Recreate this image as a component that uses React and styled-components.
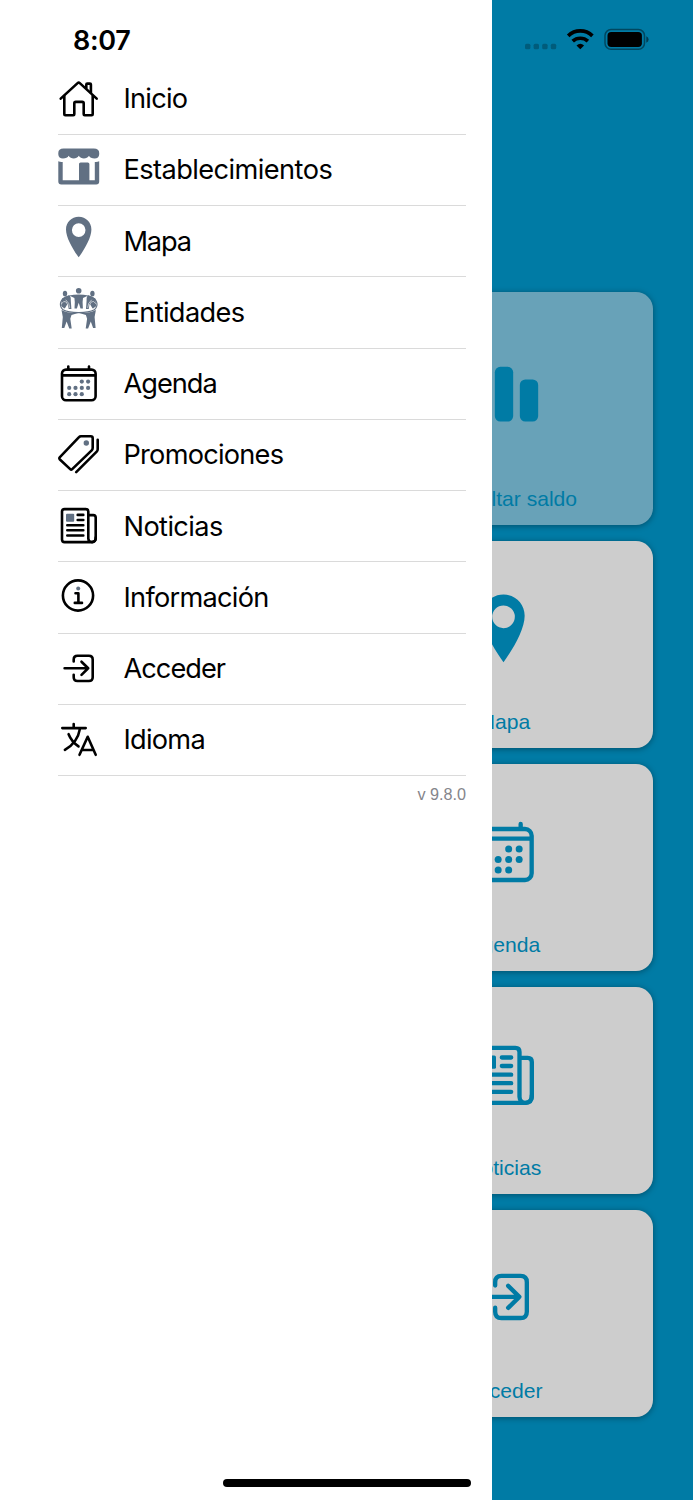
import React from "react";
import styled, { createGlobalStyle } from "styled-components";

const blue = "#007ba5";
const slate = "#617083";

const GlobalStyle = createGlobalStyle`
  * {
    box-sizing: border-box;
  }
  body {
    margin: 0;
    background: #fff;
  }
`;

const Screen = styled.div`
  display: grid;
  grid-template-columns: 492px 1fr;
  width: 693px;
  height: 1500px;
  overflow: hidden;
  font-family: Inter, "Liberation Sans", sans-serif;
`;

const Drawer = styled.aside`
  display: flex;
  flex-direction: column;
  min-width: 0;
  padding: 0 26px 0 58px;
  background: #fff;
  color: #000;
`;

const Clock = styled.time`
  height: 63.6px;
  padding: 24px 0 0 15px;
  font-size: 27px;
  font-weight: 600;
  line-height: 34px;
  letter-spacing: ${(props) => props.$spacing}px;
`;

const Menu = styled.ul`
  margin: 0;
  padding: 0;
  list-style: none;
`;

const MenuItem = styled.li`
  display: flex;
  align-items: center;
  gap: 23.5px;
  height: 71.25px;
  border-bottom: 1px solid #dadada;
  font-size: 27.2px;
  letter-spacing: ${(props) => props.$spacing}px;
  white-space: nowrap;
`;

const Version = styled.p`
  margin: 8px 0 0;
  color: #85858b;
  font-family: "Liberation Sans", Arial, sans-serif;
  font-size: 16.2px;
  line-height: 20px;
  text-align: right;
`;

const HomeIndicator = styled.div`
  align-self: flex-end;
  width: 247.5px;
  height: 8px;
  margin: auto -4.5px 13.5px 0;
  border-radius: 4px;
  background: #000;
`;

const Home = styled.main`
  display: flex;
  flex-direction: column;
  min-width: 0;
  overflow: hidden;
  background: ${blue};
`;

const StatusIcons = styled.div`
  display: flex;
  align-items: flex-start;
  height: 292px;
  padding: 28px 0 0 33px;
  flex: none;
`;

const Cards = styled.div`
  display: flex;
  flex-direction: column;
  align-items: flex-end;
  gap: 16.5px;
  padding-right: 39.7px;
`;

const Card = styled.div`
  display: flex;
  flex-direction: column;
  align-items: center;
  justify-content: space-between;
  flex: none;
  width: 299px;
  height: ${(props) => (props.$tall ? 232.5 : 206.5)}px;
  padding: ${(props) => props.$top}px 0 14px;
  border-radius: 17px;
  background: ${(props) => (props.$tall ? "#68a2b8" : "#cdcdcd")};
  box-shadow: 0 1px 6px rgba(0, 0, 0, 0.36);
  color: ${blue};
  font-family: "Liberation Sans", Arial, sans-serif;
  font-size: 21.1px;
  line-height: 24px;
`;

const Icon = styled.svg`
  flex: none;
  width: ${(props) => props.$size || 42}px;
  height: ${(props) => props.$size || 42}px;
  overflow: visible;
  fill: none;
  stroke: currentColor;
  stroke-width: 2.6;
  stroke-linecap: round;
  stroke-linejoin: round;

  .accent {
    fill: ${(props) => props.$accent || slate};
    stroke: none;
  }
  .accent-line {
    stroke: ${(props) => props.$accent || slate};
  }
`;

const shapes = {
  home: (
    <>
      <path d="M2.7 20.6 19.6 5.1q1.1-1 2.2 0L38.7 20.6" />
      <path d="M6.3 18v18.2q0 1 1 1h8q1 0 1-1V25.4q0-1.5 1.5-1.5h6.4q1.5 0 1.5 1.5v10.8q0 1 1 1h7q1 0 1-1V18" />
      <path d="M28.3 10V6.6q0-1 1-1h2.6q1 0 1 1v8.2" />
    </>
  ),
  store: (
    <g className="accent">
      <path d="M5.500-.6h30.300Q41.200-.6 41.200 4V5.200C41.200 7.900 39.300 9.600 36.600 9.600 34 9.600 31.700 8.600 31 6.800 29.800 8.600 28 9.600 25.900 9.600 23.800 9.600 22 8.600 20.800 6.800 19.600 8.600 17.800 9.600 15.700 9.600 13.600 9.600 11.800 8.600 10.600 6.800 9.900 8.600 7.600 9.600 5 9.600 2.200 9.600.3 7.900.3 5.200V4Q.3-.6 5.500-.6Z" />
      <path d="M.3 12.200Q2.500 13.300 4.700 12.900V31.200H21V15q0-1.600 1.600-1.600h7.200q1.600 0 1.600 1.600V31.200h5.400V12.900Q39 13.300 41.200 12.200V32.400q0 3-3 3H3.300q-3 0-3-3Z" />
    </g>
  ),
  pin: (
    <path
      className="accent"
      fillRule="evenodd"
      d="M20.700-3.300C13.500-3.300 8 2.300 8 9.400 8 17.500 14.700 29 20.700 37.300 26.700 29 33.400 17.500 33.400 9.400 33.400 2.300 27.900-3.300 20.700-3.300ZM20.700 3.300a6.800 6.800 0 1 1 0 13.600 6.800 6.800 0 0 1 0-13.600Z"
    />
  ),
  people: (
    <>
      <g className="accent">
        <circle cx="20.700" cy="-.2" r="2.800" />
        <ellipse cx="7" cy="2.600" rx="2.200" ry="2.900" />
        <ellipse cx="34.400" cy="2.600" rx="2.200" ry="2.900" />
        <path d="M11 4.600q9.700-2.200 19.400 0l-5.400 2.400-.4 4 .3 6.500h-2.400l-1.800-5.800-1.800 5.800h-2.400l.3-6.500-.4-4Z" />
        <path d="M4 7.600 7.500 5.800l4-1.200q1.500 1 1.300 5l.6 8.400h-2.700L9.500 13l-3 5-3.300-3Z" />
        <path d="M37.400 7.600 33.900 5.800l-4-1.200q-1.500 1-1.300 5l-.6 8.400h2.700l1.200-5 3 5 3.300-3Z" />
        <path d="M3.500 19q6 3.400 16.700 2.900l-6.700 2.200-1.200 3.600 1.400 9.700h-2.400L8.600 30.500 6.300 37H3.800l1-11Z" />
        <path d="M37.900 19q-6 3.400-16.700 2.900l6.700 2.200 1.200 3.600-1.400 9.700h2.400l2.700-6.900 2.300 6.500h2.500l-1-11Z" />
      </g>
      <path
        className="accent-line"
        strokeWidth="1.200"
        d="M11 4.800C1.500 7.500.5 14.500 5 18.800 12 22.600 29.400 22.600 36.400 18.800 40.900 14.500 39.900 7.500 30.400 4.800"
      />
      <g stroke="#fff" strokeWidth=".6">
        <path d="M3.700 12.500q2-3.500 4.500-1.500 2.300 2.500 1.700 6M8 9q3.700 3 3.700 7.500M37.700 12.500q-2-3.500-4.500-1.500-2.300 2.500-1.700 6M33.400 9q-3.700 3-3.700 7.500M4.500 17q16.200 6.500 32.400 0" />
      </g>
    </>
  ),
  agenda: (
    <>
      <rect x="4" y="6.600" width="33.600" height="30.600" rx="4" />
      <path d="M4.500 12.400h32.600M10.300 6V3.600M31 6V3.600" />
      <g className="accent">
        {[
          [23.8, 18.6],
          [30.1, 18.6],
          [11.2, 24.9],
          [17.5, 24.9],
          [23.8, 24.9],
          [30.1, 24.9],
          [11.2, 31.2],
          [17.5, 31.2],
          [23.8, 31.2],
        ].map(([x, y]) => (
          <circle key={`${x}-${y}`} cx={x} cy={y} r="2.100" />
        ))}
      </g>
    </>
  ),
  tags: (
    <>
      <path d="M23 2.300h9.700q2 0 2 2v9.500q0 1.500-1 2.500L14.200 35.100q-1 1-2 0L1.900 25.500q-1.200-1.200 0-2.400L21 3.200q.8-.9 2-.9Z" />
      <path d="M39.700 5.700v9.500q0 1.500-1 2.500L18.200 38.200" />
      <circle className="accent" cx="28.300" cy="9" r="2.700" />
    </>
  ),
  news: (
    <>
      <path d="M34 37.100H6.500Q4 37.100 4 34.600V6.600Q4 4.100 6.500 4.100h21.300q2.500 0 2.500 2.500v26.800a3.700 3.700 0 0 0 7.400 0V12.600q0-2.500-2.500-2.500h-4.500" />
      <path d="M34 37.100q3.700 0 3.700-4.500" />
      <path d="M19.700 9.900h5.600M19.700 15h5.600M9.300 20.200h16M9.300 25.300h16M9.300 30.500h16" />
      <rect className="accent" x="8" y="8.700" width="8.200" height="8" rx="1" />
    </>
  ),
  info: (
    <>
      <circle cx="20" cy="19.500" r="15.100" />
      <path d="M17.500 17.200h2.900v9.600M16.800 26.900h7.200" />
      <circle className="accent" cx="20.200" cy="12.500" r="2" />
    </>
  ),
  login: (
    <>
      <path d="M15.700 13.500v-2q0-3.800 3.800-3.800h11.400q3.800 0 3.800 3.800v17.700q0 3.800-3.800 3.800H19.500q-3.800 0-3.800-3.800v-2.400" />
      <path d="M6.600 20.300h23.600M23.500 13.700l6.700 6.600-6.700 6.600" />
    </>
  ),
  language: (
    <>
      <path d="M4.300 9.100h23.400M15.700 5v4M22 9.600C20.500 18.500 14.500 26.500 6.900 30.900M10.600 15.200Q13.500 22.500 20.500 27.400" />
      <path d="m21.500 35.800 8.200-18 8 18M24 31h11.500" />
    </>
  ),
  bars: (
    <g className="accent">
      <rect x=".3" y="18" width="11" height="19" rx="3.300" />
      <rect x="15.500" y="4.100" width="11" height="32.800" rx="3.300" />
      <rect x="30.500" y="11.700" width="11" height="25.200" rx="3.300" />
    </g>
  ),
};

const menu = [
  { icon: "home", label: "Inicio", spacing: -0.75 },
  { icon: "store", label: "Establecimientos", spacing: -0.57 },
  { icon: "pin", label: "Mapa", spacing: -1.2 },
  { icon: "people", label: "Entidades", spacing: -0.63 },
  { icon: "agenda", label: "Agenda", spacing: -1 },
  { icon: "tags", label: "Promociones", spacing: -0.77 },
  { icon: "news", label: "Noticias", spacing: -0.6 },
  { icon: "info", label: "Información", spacing: -0.74 },
  { icon: "login", label: "Acceder", spacing: -0.98 },
  { icon: "language", label: "Idioma", spacing: -0.75 },
];

const cards = [
  { icon: "bars", label: "Consultar saldo", tall: true, top: 67.6 },
  { icon: "pin", label: "Mapa", top: 59 },
  { icon: "agenda", label: "Agenda", top: 53.7 },
  { icon: "news", label: "Noticias", top: 53.7 },
  { icon: "login", label: "Acceder", top: 53.3 },
];

function StatusBar() {
  return (
    <StatusIcons>
      <svg width="126" height="24" viewBox="525 28 126 24">
        <g fill="#000" fillOpacity=".25">
          <rect x="525" y="43.800" width="5.400" height="5.400" rx="1.500" />
          <rect x="533.600" y="43.800" width="5.400" height="5.400" rx="1.500" />
          <rect x="542.200" y="43.800" width="5.400" height="5.400" rx="1.500" />
          <rect x="550.800" y="43.800" width="5.400" height="5.400" rx="1.500" />
        </g>
        <g fill="none" stroke="#000" strokeWidth="3.700">
          <path d="M568.200 35.800a17.500 17.500 0 0 1 24.200 0" />
          <path d="M572.700 41.200a11.200 11.200 0 0 1 15.200 0" />
        </g>
        <path d="M580.300 49.300 576.500 45.500q3.800-3.600 7.600 0Z" />
        <rect
          x="605"
          y="29.600"
          width="39.500"
          height="19.700"
          rx="6"
          fill="none"
          stroke="#000"
          strokeOpacity=".42"
          strokeWidth="1.500"
        />
        <rect x="607.500" y="32" width="34.400" height="14.900" rx="3.700" />
        <path d="M646.300 36.200q2.300 1 2.300 3.300t-2.300 3.300Z" fillOpacity=".5" />
      </svg>
    </StatusIcons>
  );
}

export default function App() {
  return (
    <>
      <GlobalStyle />
      <Screen>
        <Drawer>
          <Clock $spacing={-0.3}>8:07</Clock>
          <Menu>
            {menu.map((item) => (
              <MenuItem key={item.label} $spacing={item.spacing}>
                <Icon viewBox="0 0 42 42">{shapes[item.icon]}</Icon>
                <span>{item.label}</span>
              </MenuItem>
            ))}
          </Menu>
          <Version>v 9.8.0</Version>
          <HomeIndicator />
        </Drawer>
        <Home>
          <StatusBar />
          <Cards>
            {cards.map((card) => (
              <Card key={card.label} $tall={card.tall} $top={card.top}>
                <Icon viewBox="0 0 42 42" $size={70} $accent={blue}>
                  {shapes[card.icon]}
                </Icon>
                <span>{card.label}</span>
              </Card>
            ))}
          </Cards>
        </Home>
      </Screen>
    </>
  );
}
